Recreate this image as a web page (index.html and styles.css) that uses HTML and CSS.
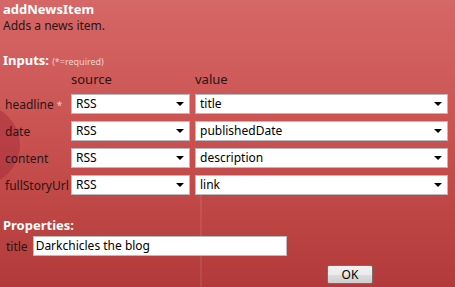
FILE: index.html
```html
<!DOCTYPE html>
<html>
<head>
<meta charset="utf-8">
<link rel="stylesheet" href="styles.css">
</head>
<body>
<div class="bubble"></div>
<div class="stripe"></div>
<div class="panel">
  <div class="title">addNewsItem</div>
  <div class="desc">Adds a news item.</div>
  <div class="section inputs-head"><span class="heading">Inputs:</span> <span class="note">(*=required)</span></div>
  <div class="grid">
    <div></div>
    <div class="colhead">source</div>
    <div class="colhead">value</div>

    <div class="label">headline <span class="star">*</span></div>
    <div class="select"><span>RSS</span><i class="arrow"></i></div>
    <div class="select"><span>title</span><i class="arrow"></i></div>

    <div class="label">date</div>
    <div class="select"><span>RSS</span><i class="arrow"></i></div>
    <div class="select"><span>publishedDate</span><i class="arrow"></i></div>

    <div class="label">content</div>
    <div class="select"><span>RSS</span><i class="arrow"></i></div>
    <div class="select"><span>description</span><i class="arrow"></i></div>

    <div class="label">fullStoryUrl</div>
    <div class="select"><span>RSS</span><i class="arrow"></i></div>
    <div class="select"><span>link</span><i class="arrow"></i></div>
  </div>
  <div class="section props-head"><span class="heading">Properties:</span></div>
  <div class="prop-row">
    <span class="plabel">title</span>
    <div class="textbox">Darkchicles the blog</div>
  </div>
  <div class="actions">
    <div class="btn">OK</div>
  </div>
</div>
</body>
</html>
```
FILE: styles.css
```css
html, body {
  margin: 0;
  padding: 0;
  width: 455px;
  height: 287px;
  overflow: hidden;
}
body {
  background: linear-gradient(to bottom, #d56766 0%, #c8514f 50%, #b23a3a 100%);
  font-family: "Noto Sans", "DejaVu Sans", sans-serif;
  font-size: 12px;
  color: #2a1414;
  position: relative;
}
.bubble {
  position: absolute;
  left: -60px;
  top: 105px;
  width: 80px;
  height: 80px;
  border-radius: 50%;
  background: rgba(150, 30, 50, 0.35);
}
.stripe {
  position: absolute;
  left: 200px;
  top: 195px;
  width: 2px;
  height: 92px;
  background: rgba(255, 255, 255, 0.08);
}
.panel {
  position: relative;
  padding: 1px 3px 0;
}
.title {
  font-weight: bold;
  font-size: 13px;
  color: #fff;
  line-height: 17px;
}
.desc {
  line-height: 15px;
}
.section {
  color: #fff;
}
.inputs-head {
  margin-top: 19px;
  line-height: 16px;
}
.heading {
  font-weight: bold;
  font-size: 13px;
}
.note {
  font-size: 9px;
  color: #f3d0d0;
}
.grid {
  display: grid;
  grid-template-columns: 61px 119px 253px;
  column-gap: 5px;
  row-gap: 7px;
  margin-left: 2px;
  margin-top: 2px;
  align-items: center;
}
.colhead {
  font-size: 13px;
  line-height: 14px;
  margin-bottom: 1px;
}
.label {
  font-size: 12px;
  white-space: nowrap;
}
.star {
  color: #f3c8c8;
  font-size: 10px;
}
.select {
  position: relative;
  height: 18px;
  background: #fff;
  border: 1px solid #b9b9c2;
  line-height: 18px;
  padding-left: 4px;
  font-size: 12px;
  color: #000;
}
.arrow {
  position: absolute;
  right: 5px;
  top: 7px;
  width: 0;
  height: 0;
  border-left: 4px solid transparent;
  border-right: 4px solid transparent;
  border-top: 4px solid #000;
}
.props-head {
  margin-top: 22px;
  line-height: 16px;
}
.prop-row {
  display: flex;
  align-items: center;
  gap: 5px;
  margin-top: 2px;
  padding-left: 3px;
}
.plabel {
  font-size: 12px;
}
.textbox {
  width: 250px;
  height: 18px;
  line-height: 18px;
  background: #fff;
  border: 1px solid #b9b9c2;
  padding-left: 2px;
  color: #000;
  font-size: 12px;
}
.actions {
  display: flex;
  margin-top: 9px;
  padding-left: 324px;
}
.btn {
  width: 44px;
  height: 17px;
  line-height: 17px;
  text-align: center;
  border: 1px solid #707070;
  border-radius: 2px;
  background: linear-gradient(to bottom, #f2f2f2 0%, #ebebeb 50%, #dcdcdc 51%, #cfcfcf 100%);
  color: #000;
  font-size: 12px;
}
```
